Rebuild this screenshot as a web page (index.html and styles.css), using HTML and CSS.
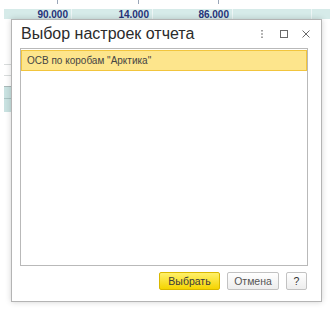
FILE: index.html
```html
<!DOCTYPE html>
<html lang="ru">
<head>
    <meta charset="UTF-8">
    <title>Выбор настроек отчета</title>
    <link rel="stylesheet" href="styles.css">
</head>
<body>
    <div class="page">
        <div class="ticks">
            <span></span><span></span><span></span>
        </div>
        <div class="sum-row">
            <div class="cell">90.000</div>
            <div class="cell">14.000</div>
            <div class="cell">86.000</div>
            <div class="cell"></div>
        </div>
        <div class="side">
            <div class="side-line"></div>
            <div class="side-line"></div>
            <div class="side-block"></div>
        </div>
    </div>

    <div class="dialog">
        <div class="dialog-header">
            <div class="dialog-title">Выбор настроек отчета</div>
            <div class="dialog-tools">
                <svg width="12" height="12" viewBox="0 0 12 12">
                    <rect x="5.25" y="2" width="1.5" height="1.5" fill="#808080"/>
                    <rect x="5.25" y="5.25" width="1.5" height="1.5" fill="#808080"/>
                    <rect x="5.25" y="8.5" width="1.5" height="1.5" fill="#808080"/>
                </svg>
                <svg width="12" height="12" viewBox="0 0 12 12">
                    <rect x="2.5" y="2.5" width="7" height="7" fill="none" stroke="#6a6a6a" stroke-width="1"/>
                </svg>
                <svg width="12" height="12" viewBox="0 0 12 12">
                    <path d="M2.5 2.5 L9.5 9.5 M9.5 2.5 L2.5 9.5" stroke="#6a6a6a" stroke-width="1"/>
                </svg>
            </div>
        </div>
        <div class="settings-list">
            <div class="settings-item selected">ОСВ по коробам "Арктика"</div>
        </div>
        <div class="dialog-footer">
            <button class="btn btn-primary">Выбрать</button>
            <button class="btn">Отмена</button>
            <button class="btn btn-help">?</button>
        </div>
    </div>
</body>
</html>
```

FILE: styles.css
```css
body {
    margin: 0;
    font-family: 'Liberation Sans', Arial, sans-serif;
    background-color: white;
    width: 330px;
    height: 312px;
    overflow: hidden;
}

.page {
    padding-left: 4px;
}

.ticks {
    display: grid;
    grid-template-columns: 68px 81px 80px;
    height: 9px;
}

.ticks span {
    justify-self: end;
    width: 1px;
    height: 4px;
    margin-right: 14px;
    background-color: #9aa6b8;
}

.sum-row {
    display: grid;
    grid-template-columns: 68px 81px 80px 79px;
    height: 10px;
    background-color: #d6ebe9;
}

.cell {
    border-right: 1px solid #eef6f6;
    text-align: right;
    padding-right: 3px;
    font-size: 10px;
    font-weight: bold;
    line-height: 11px;
    color: #26337a;
}

.side {
    margin-top: 45px;
    width: 7px;
}

.side-line {
    height: 10px;
    border-top: 1px solid #d8dcdc;
}

.side-block {
    height: 25px;
    background-color: #c9e2e1;
    border-top: 1px solid #a9b9b9;
    background-image: linear-gradient(#c9e2e1 11px, #a9c4c3 11px, #a9c4c3 12px, #c9e2e1 12px);
}

.dialog {
    position: absolute;
    left: 11px;
    top: 19px;
    width: 311px;
    height: 283px;
    box-sizing: border-box;
    background-color: white;
    border: 1px solid #b4b4b4;
    box-shadow: 0 0 6px rgba(0, 0, 0, 0.18);
    display: flex;
    flex-direction: column;
}

.dialog-header {
    display: flex;
    align-items: center;
    height: 28px;
    padding-left: 9px;
    padding-right: 9px;
}

.dialog-title {
    flex: 1;
    font-size: 16px;
    color: #2b2b2b;
}

.dialog-tools {
    display: flex;
    gap: 10px;
}

.settings-list {
    height: 218px;
    box-sizing: border-box;
    margin: 0 13px 0 8px;
    border: 1px solid #b9b9b9;
    padding: 1px 0;
}

.settings-item {
    height: 21px;
    box-sizing: border-box;
    padding-left: 5px;
    font-size: 10px;
    line-height: 19px;
    color: #444;
}

.settings-item.selected {
    background-color: #fde58c;
    border: 1px solid #f2c53d;
}

.dialog-footer {
    display: flex;
    justify-content: flex-end;
    gap: 7px;
    margin-top: 6px;
    padding-right: 14px;
}

.btn {
    height: 18px;
    padding: 0;
    width: 52px;
    font-family: 'Liberation Sans', Arial, sans-serif;
    font-size: 10.5px;
    color: #555;
    border: 1px solid #c2c2c2;
    border-radius: 2px;
    background: linear-gradient(#ffffff, #ededed);
}

.btn-primary {
    width: 61px;
    color: #3a3a3a;
    border-color: #d9b800;
    background: linear-gradient(#fff06a, #f5d400);
}

.btn-help {
    width: 21px;
    color: #333;
}
```
